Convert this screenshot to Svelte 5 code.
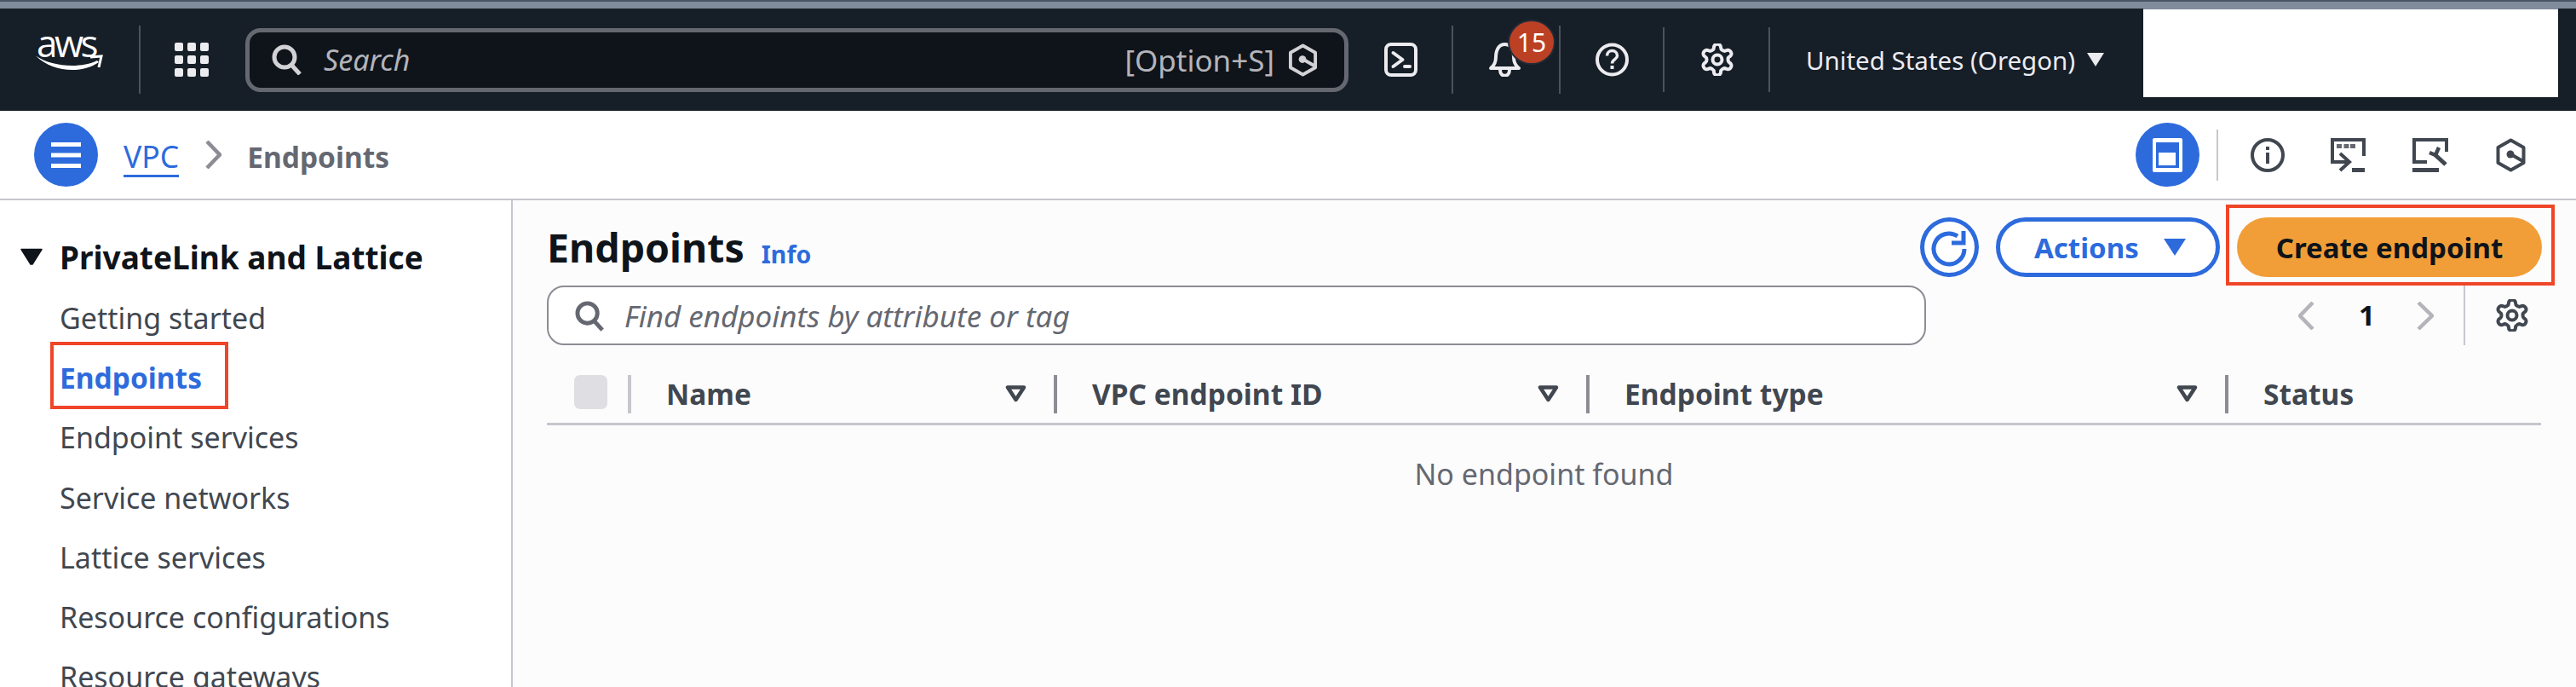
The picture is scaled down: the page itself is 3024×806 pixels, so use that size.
<script lang="ts">
  const navItems = [
    'Getting started',
    'Endpoints',
    'Endpoint services',
    'Service networks',
    'Lattice services',
    'Resource configurations',
    'Resource gateways'
  ];

  const gearPath =
    'M12.22 2h-.44a2 2 0 0 0-2 2v.18a2 2 0 0 1-1 1.73l-.43.25a2 2 0 0 1-2 0l-.15-.08a2 2 0 0 0-2.73.73l-.22.38a2 2 0 0 0 .73 2.73l.15.1a2 2 0 0 1 1 1.72v.51a2 2 0 0 1-1 1.74l-.15.09a2 2 0 0 0-.73 2.73l.22.38a2 2 0 0 0 2.73.73l.15-.08a2 2 0 0 1 2 0l.43.25a2 2 0 0 1 1 1.73V20a2 2 0 0 0 2 2h.44a2 2 0 0 0 2-2v-.18a2 2 0 0 1 1-1.73l.43-.25a2 2 0 0 1 2 0l.15.08a2 2 0 0 0 2.73-.73l.22-.39a2 2 0 0 0-.73-2.73l-.15-.08a2 2 0 0 1-1-1.74v-.5a2 2 0 0 1 1-1.74l.15-.09a2 2 0 0 0 .73-2.73l-.22-.38a2 2 0 0 0-2.73-.73l-.15.08a2 2 0 0 1-2 0l-.43-.25a2 2 0 0 1-1-1.73V4a2 2 0 0 0-2-2z';
</script>

{#snippet gear(size)}
  <svg width={size} height={size} viewBox="1.6 1.6 20.8 20.8" fill="none" stroke="currentColor" stroke-width="2.2">
    <path d={gearPath} />
    <circle cx="12" cy="12" r="3" />
  </svg>
{/snippet}

{#snippet hexagon(w, h)}
  <svg width={w} height={h} viewBox="0 0 36 40" fill="none" stroke="currentColor" stroke-width="4">
    <path d="M18 2.500 33 11v18l-15 8.500L3 29V11Z" stroke-linejoin="round" />
    <circle cx="17.500" cy="19" r="4.500" fill="currentColor" stroke="none" />
    <path d="M18 19l14 8" />
  </svg>
{/snippet}

{#snippet lens(w, h)}
  <svg width={w} height={h} viewBox="0 0 37 36" fill="none" stroke="currentColor" stroke-width="5">
    <circle cx="15" cy="15" r="12" />
    <path d="M23 24l10 11" />
  </svg>
{/snippet}

{#snippet sortIcon()}
  <svg class="sort" width="25" height="20" viewBox="0 0 25 20" fill="none" stroke="#414750" stroke-width="4.500">
    <path d="M3 2.500h19L12.500 17Z" stroke-linejoin="round" />
  </svg>
{/snippet}

<div class="page">
  <div class="stripe"></div>

  <header class="topbar">
    <div class="logo">
      <span class="logo-text">aws</span>
      <svg width="79" height="19" viewBox="0 0 79 19" fill="none">
        <path d="M0 1.500C18 14 52 17 72 7l2 2C54 23 20 21 0 1.500Z" fill="#fff" />
        <path d="M64 3 77 2 74 15" stroke="#fff" stroke-width="3" />
      </svg>
    </div>
    <div class="vline logo-line"></div>
    <svg class="grid-icon" width="40" height="40" viewBox="0 0 40 40" fill="#ebebf0">
      {#each [0, 15, 30] as y}
        {#each [0, 15, 30] as x}
          <rect {x} {y} width="10" height="10" rx="2" />
        {/each}
      {/each}
    </svg>
    <div class="global-search">
      <span class="lens">{@render lens(37, 36)}</span>
      <span class="search-text">Search</span>
      <span class="shortcut">[Option+S]</span>
      <span class="hex">{@render hexagon(35, 39)}</span>
    </div>
    <svg class="shell" width="39" height="40" viewBox="0 0 39 40" fill="none" stroke="#ebebf0" stroke-width="4" stroke-linecap="round" stroke-linejoin="round">
      <rect x="2" y="2" width="35" height="36" rx="6" />
      <path d="M10.500 12l11 8-11 8" />
      <path d="M24 28h6" />
    </svg>
    <div class="vline shell-line"></div>
    <div class="bell">
      <svg width="37" height="40" viewBox="0 0 37 40" fill="none" stroke="#ebebf0" stroke-width="4">
        <path d="M2 30c4-3 6-7 6-13C8 8 12 2 18.500 2S29 8 29 17c0 6 2 10 6 13Z" stroke-linejoin="round" />
        <path d="M13 32c0 9 11 9 11 0" />
      </svg>
      <span class="badge">15</span>
    </div>
    <div class="vline bell-line"></div>
    <svg class="help" width="39" height="40" viewBox="0 0 39 40" fill="none" stroke="#ebebf0" stroke-width="4">
      <circle cx="19.500" cy="20" r="17.500" />
      <path d="M13.500 15.500c0-8 12-8 12 0 0 4-6 4.500-6 9" stroke-width="3.500" />
      <path d="M19.500 27v4" stroke-width="4" />
    </svg>
    <div class="vline help-line"></div>
    <span class="top-gear">{@render gear(38)}</span>
    <div class="vline gear-line"></div>
    <span class="region">United States (Oregon)</span>
    <span class="region-caret"></span>
    <div class="account"></div>
  </header>

  <nav class="crumbs">
    <div class="menu-btn">
      <svg width="35" height="30" viewBox="0 0 35 30" fill="#fff">
        <rect width="35" height="5" />
        <rect y="12.500" width="35" height="5" />
        <rect y="25" width="35" height="5" />
      </svg>
    </div>
    <span class="crumb-link">VPC</span>
    <svg class="crumb-chev" width="19" height="33" viewBox="0 0 19 33" fill="none" stroke="#8c8c94" stroke-width="4.500">
      <path d="M2 1l15 15.500L2 32" />
    </svg>
    <span class="crumb-current">Endpoints</span>

    <div class="tools">
      <div class="panel-btn">
        <svg width="35" height="40" viewBox="0 0 35 40">
          <rect width="35" height="40" rx="2" fill="#fff" />
          <rect x="4" y="5" width="27" height="30" fill="#2d6bdd" />
          <rect x="7" y="17" width="20" height="15" fill="#fff" />
        </svg>
      </div>
      <div class="tools-line"></div>
      <svg class="tool info" width="40" height="40" viewBox="0 0 40 40" fill="none" stroke="#414750" stroke-width="4">
        <circle cx="20" cy="20" r="18" />
        <path d="M20 17v13" stroke-width="4" />
        <path d="M20 10v4" stroke-width="4" />
      </svg>
      <svg class="tool t2" width="41" height="40" viewBox="0 0 41 40" fill="none" stroke="#414750" stroke-width="4">
        <path d="M20 28H2V2h37v19" />
        <path d="M11 18l11 10-11 10" />
        <path d="M25 37.500h15" stroke-width="5" />
        <g fill="#656871" stroke="none">
          <rect x="7" y="7" width="6" height="5" />
          <rect x="15.500" y="7" width="6" height="5" />
          <rect x="23" y="7" width="6" height="5" />
        </g>
      </svg>
      <svg class="tool t3" width="42" height="40" viewBox="0 0 42 40" fill="none" stroke="#414750" stroke-width="4">
        <path d="M17 28H2V2h38v14" />
        <path d="M20 17l7 3 4-9" stroke-width="4.500" />
        <path d="M27 20l12 11" stroke-width="5" />
        <path d="M0 37.500h31" stroke-width="5" />
      </svg>
      <span class="tool t4">{@render hexagon(37, 40)}</span>
    </div>
  </nav>

  <div class="body">
    <aside class="sidebar">
      <div class="section">
        <svg width="26" height="20" viewBox="0 0 26 20" fill="#0f141a">
          <path d="M1 1.500 25 1.500 14 19 12 19Z" stroke="#0f141a" stroke-width="1.500" stroke-linejoin="round" />
        </svg>
        <span>PrivateLink and Lattice</span>
      </div>
      <ul>
        {#each navItems as item, i}
          <li class:active={i === 1}>
            {item}
            {#if i === 1}<span class="mark"></span>{/if}
          </li>
        {/each}
      </ul>
    </aside>

    <main class="main">
      <div class="title-row">
        <h1>Endpoints</h1>
        <span class="info-link">Info</span>
        <div class="actions">
          <div class="refresh">
            <svg width="44" height="46" viewBox="0 0 44 46" fill="none" stroke="#2d6bdd" stroke-width="5">
              <path d="M39 25A18 18 0 1 1 31 10" />
              <path d="M38 4v14H24" />
            </svg>
          </div>
          <div class="actions-btn">
            <span>Actions</span>
            <i class="caret"></i>
          </div>
          <div class="create-mark">
            <div class="create-btn">Create endpoint</div>
          </div>
        </div>
      </div>

      <div class="filter-row">
        <div class="filter">
          <span class="filter-lens">{@render lens(36, 37)}</span>
          <span class="filter-text">Find endpoints by attribute or tag</span>
        </div>
        <div class="pager">
          <svg width="19" height="33" viewBox="0 0 19 33" fill="none" stroke="#b4b4bb" stroke-width="4.500">
            <path d="M17 1 2 16.500 17 32" />
          </svg>
          <span class="page-no">1</span>
          <svg width="20" height="33" viewBox="0 0 20 33" fill="none" stroke="#b4b4bb" stroke-width="4.500">
            <path d="M2 1l16 15.500L2 32" />
          </svg>
          <div class="pager-line"></div>
          <span class="pager-gear">{@render gear(38)}</span>
        </div>
      </div>

      <div class="table-head">
        <div class="col-select">
          <span class="checkbox"></span>
          <span class="sep light"></span>
        </div>
        <div class="col w1">
          <span class="label">Name</span>
          {@render sortIcon()}
          <span class="sep"></span>
        </div>
        <div class="col w2">
          <span class="label">VPC endpoint ID</span>
          {@render sortIcon()}
          <span class="sep"></span>
        </div>
        <div class="col w3">
          <span class="label">Endpoint type</span>
          {@render sortIcon()}
          <span class="sep"></span>
        </div>
        <div class="col">
          <span class="label">Status</span>
        </div>
      </div>
      <p class="empty">No endpoint found</p>
    </main>
  </div>
</div>

<style>
  :global(body) {
    margin: 0;
    background: #fff;
    overflow: hidden;
  }

  .page {
    width: 3024px;
    height: 806px;
    overflow: hidden;
    font-family: 'Noto Sans', 'Open Sans', sans-serif;
    display: flex;
    flex-direction: column;
  }

  .stripe {
    height: 8px;
    border-top: 2px solid #4a5464;
    background: #808b9b;
    flex: none;
  }

  .topbar {
    height: 120px;
    flex: none;
    background: #161e27;
    display: flex;
    align-items: center;
    color: #ebebf0;
  }

  .logo {
    margin-left: 42px;
    width: 79px;
    height: 48px;
    display: flex;
    flex-direction: column;
    align-items: flex-start;
    color: #fff;
    flex: none;
  }

  .logo svg {
    flex: none;
    margin-top: 10px;
  }

  .logo-text {
    font-family: 'Open Sans', sans-serif;
    font-size: 44px;
    line-height: 30px;
    height: 19px;
    margin: -11px 0 0 1px;
    letter-spacing: -3.500px;
  }

  .vline {
    width: 2px;
    height: 80px;
    background: #4b525b;
    flex: none;
  }

  .logo-line { margin-left: 42px; }
  .grid-icon { margin-left: 40px; flex: none; }

  .global-search {
    margin-left: 43px;
    width: 1295px;
    height: 75px;
    box-sizing: border-box;
    border: 5px solid #656871;
    border-radius: 18px;
    background: #0f141a;
    display: flex;
    align-items: center;
    padding-left: 26px;
    color: #b4b4bb;
    font-size: 34px;
    flex: none;
  }

  .lens { display: flex; color: #d1d1d6; }
  .search-text { margin-left: 24px; font-style: italic; }
  .shortcut { margin-left: auto; font-size: 35px; }
  .hex { display: flex; margin-left: 16px; margin-right: 31px; color: #d1d1d6; }

  .shell { margin-left: 42px; flex: none; }
  .shell-line { margin-left: 40px; }

  .bell {
    margin-left: 42px;
    width: 37px;
    height: 40px;
    position: relative;
    flex: none;
  }

  .badge {
    position: absolute;
    left: 24px;
    top: -25px;
    width: 52px;
    height: 49px;
    border-radius: 50%;
    background: #bc4124;
    color: #fff;
    font-size: 30px;
    line-height: 49px;
    text-align: center;
    box-shadow: 0 0 0 2px #232b37;
  }

  .bell-line { margin-left: 45px; }
  .help { margin-left: 41px; flex: none; }
  .help-line { margin-left: 40px; height: 76px; }
  .top-gear { display: flex; margin-left: 43px; }
  .gear-line { margin-left: 41px; height: 76px; }

  .region {
    margin-left: 42px;
    font-size: 29.500px;
    white-space: nowrap;
    width: 315px;
    flex: none;
  }

  .region-caret {
    margin-left: 15px;
    width: 0;
    height: 0;
    border-left: 10px solid transparent;
    border-right: 10px solid transparent;
    border-top: 16px solid #ebebf0;
    flex: none;
  }

  .account {
    margin-left: 46px;
    width: 487px;
    height: 103px;
    background: #fff;
    border-top: 2px solid #808b9b;
    margin-top: -18px;
    box-sizing: content-box;
    flex: none;
  }

  .crumbs {
    height: 103px;
    flex: none;
    background: #fff;
    border-bottom: 2px solid #c6c6cd;
    display: flex;
    align-items: center;
  }

  .menu-btn {
    margin-left: 40px;
    width: 75px;
    height: 75px;
    border-radius: 50%;
    background: #2d6bdd;
    display: flex;
    align-items: center;
    justify-content: center;
    flex: none;
  }

  .crumb-link {
    margin-left: 30px;
    font-size: 35.500px;
    color: #2d6bdd;
    border-bottom: 3px solid #2d6bdd;
    line-height: 44px;
    padding-top: 5px;
  }

  .crumb-chev { margin-left: 31px; flex: none; }

  .crumb-current {
    margin-left: 30px;
    margin-top: 4px;
    font-size: 33.500px;
    font-weight: 700;
    color: #656871;
  }

  .tools {
    margin-left: auto;
    margin-right: 58px;
    display: flex;
    align-items: center;
  }

  .panel-btn {
    width: 75px;
    height: 75px;
    border-radius: 50%;
    background: #2d6bdd;
    display: flex;
    align-items: center;
    justify-content: center;
  }

  .tools-line {
    width: 2px;
    height: 60px;
    background: #c6c6cd;
    margin-left: 20px;
  }

  .tool { flex: none; color: #414750; display: flex; }
  .info { margin-left: 38px; }
  .t2 { margin-left: 54px; }
  .t3 { margin-left: 55px; }
  .t4 { margin-left: 55px; }

  .body {
    flex: 1;
    display: flex;
    min-height: 0;
  }

  .sidebar {
    flex: none;
    box-sizing: border-box;
    border-right: 2px solid #c6c6cd;
    padding-left: 24px;
    padding-top: 40px;
    background: #fff;
    width: 602px;
  }

  .section {
    display: flex;
    align-items: center;
    gap: 20px;
    height: 52px;
    font-size: 37px;
    font-weight: 700;
    color: #0f141a;
  }

  ul {
    list-style: none;
    margin: 0;
    padding: 0 0 0 46px;
    margin-top: 11px;
  }

  li {
    height: 70.200px;
    line-height: 70px;
    font-size: 34px;
    color: #414750;
    position: relative;
    white-space: nowrap;
  }

  li.active {
    color: #2d6bdd;
    font-weight: 700;
    font-size: 33.500px;
  }

  .mark {
    position: absolute;
    left: -11px;
    top: -7px;
    width: 209px;
    height: 79px;
    box-sizing: border-box;
    border: 4px solid #ef4528;
  }

  .main {
    flex: 1;
    min-width: 0;
    background: #fcfcfd;
    padding: 5px 25px 0 40px;
    box-sizing: border-box;
  }

  .title-row {
    height: 95px;
    display: flex;
    align-items: flex-start;
  }

  h1 {
    margin: 18px 0 0;
    font-size: 46.500px;
    line-height: 64px;
    font-weight: 700;
    color: #0f141a;
  }

  .info-link {
    margin: 36px 0 0 20px;
    font-size: 28.500px;
    line-height: 44px;
    font-weight: 700;
    color: #2d6bdd;
  }

  .actions {
    margin-left: auto;
    display: flex;
    align-items: flex-start;
  }

  .refresh {
    margin-top: 15px;
    width: 69px;
    height: 70px;
    box-sizing: border-box;
    border: 5px solid #2d6bdd;
    border-radius: 50%;
    background: #fff;
    display: flex;
    align-items: center;
    justify-content: center;
  }

  .actions-btn {
    margin: 15px 0 0 20px;
    width: 263px;
    height: 70px;
    box-sizing: border-box;
    border: 5px solid #2d6bdd;
    border-radius: 35px;
    background: #fff;
    display: flex;
    align-items: center;
    padding-left: 40px;
    font-size: 33px;
    font-weight: 700;
    color: #2d6bdd;
  }

  .caret {
    margin-left: 29px;
    width: 0;
    height: 0;
    border-left: 13px solid transparent;
    border-right: 13px solid transparent;
    border-top: 20px solid #2d6bdd;
  }

  .create-mark {
    margin-left: 7px;
    box-sizing: border-box;
    width: 386px;
    height: 95px;
    border: 4px solid #ef4528;
    padding: 11px 11px 6px 9px;
  }

  .create-btn {
    height: 70px;
    border-radius: 35px;
    background: #f29e38;
    display: flex;
    align-items: center;
    justify-content: center;
    font-size: 33px;
    font-weight: 700;
    color: #0f141a;
  }

  .filter-row {
    display: flex;
    align-items: center;
    height: 70px;
  }

  .filter {
    width: 1619px;
    height: 70px;
    box-sizing: border-box;
    border: 2.500px solid #8c8c94;
    border-radius: 20px;
    background: #fff;
    display: flex;
    align-items: center;
    padding-left: 31px;
    flex: none;
  }

  .filter-lens { display: flex; color: #656871; }

  .filter-text {
    margin-left: 22px;
    font-size: 35px;
    font-style: italic;
    color: #656871;
    white-space: nowrap;
  }

  .pager {
    margin-left: auto;
    margin-right: 31px;
    display: flex;
    align-items: center;
  }

  .page-no {
    margin: 0 52px;
    width: 16px;
    font-size: 33px;
    font-weight: 700;
    color: #0f141a;
    line-height: 40px;
    text-align: center;
  }

  .pager-line {
    width: 2px;
    height: 70px;
    background: #c6c6cd;
    margin-left: 35px;
  }

  .pager-gear { display: flex; margin-left: 36px; color: #414750; }

  .table-head {
    margin: 30px 16px 0 0;
    height: 64px;
    box-sizing: border-box;
    border-bottom: 3px solid #c6c6cd;
    display: flex;
    font-size: 33.500px;
    font-weight: 700;
    color: #414750;
  }

  .col-select {
    width: 99px;
    flex: none;
    display: flex;
    padding: 5px 0 0 32px;
    box-sizing: border-box;
  }

  .checkbox {
    width: 39px;
    height: 40px;
    border-radius: 7px;
    background: #dedee3;
    flex: none;
  }

  .sep {
    width: 4px;
    height: 45px;
    background: #8c8c94;
    flex: none;
  }

  .sep.light {
    margin-left: 24px;
    background: #c6c6cd;
  }

  .col {
    padding: 5px 0 0 41px;
    box-sizing: border-box;
    display: flex;
    align-items: flex-start;
    flex: 1;
  }

  .col.w1 { width: 500px; flex: none; }
  .col.w2 { width: 625px; flex: none; }
  .col.w3 { width: 750px; flex: none; }

  .label {
    flex: 1;
    line-height: 45px;
    white-space: nowrap;
  }

  .sort {
    margin: 12px 32px 0 0;
    flex: none;
  }

  .empty {
    margin: 34px 16px 0 0;
    text-align: center;
    font-size: 34px;
    line-height: 46px;
    color: #656871;
  }
</style>
